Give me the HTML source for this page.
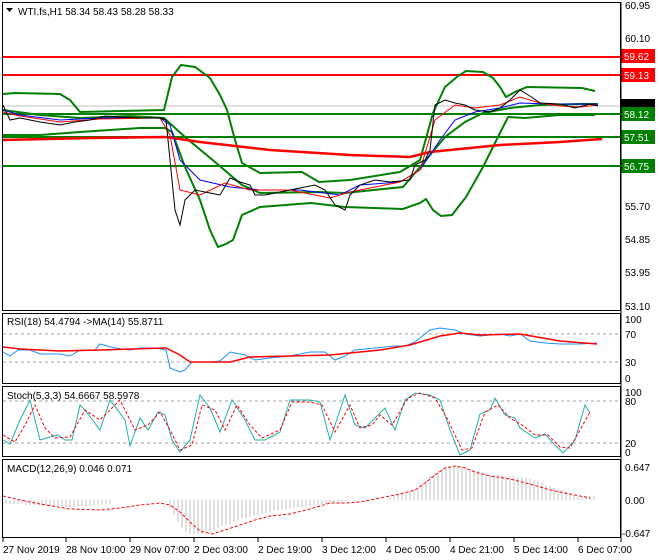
<!DOCTYPE html><html><head><style>
body{margin:0;background:#fff;width:660px;height:560px;overflow:hidden}
svg{display:block;font-family:"Liberation Sans",sans-serif;font-size:10px}
</style></head><body>
<svg width="660" height="560" viewBox="0 0 660 560">
<rect width="660" height="560" fill="#fff"/>
<g fill="none" stroke="#000" stroke-width="1">
<rect x="2.5" y="2.5" width="618" height="308"/>
<rect x="2.5" y="313.5" width="618" height="70"/>
<rect x="2.5" y="386.5" width="618" height="70"/>
<rect x="2.5" y="459.5" width="618" height="78"/>
</g>
<!-- main -->
<line x1="3" y1="106" x2="620" y2="106" stroke="#c0c0c0"/>
<g stroke="#ff0000" stroke-width="2"><line x1="3" y1="57" x2="620" y2="57"/><line x1="3" y1="75" x2="620" y2="75"/></g>
<g stroke="#008000" stroke-width="2"><line x1="3" y1="114" x2="620" y2="114"/><line x1="3" y1="137" x2="620" y2="137"/><line x1="3" y1="166" x2="620" y2="166"/></g>
<g fill="none" stroke="#008000" stroke-width="2">
<polyline points="3,94 15,93 60,94 70,100 80,112 120,111 164,110 172,77 181,65 195,67 210,78 220,95 227,110 235,140 242,163 260,173 302,172 319,182 350,180 400,172 420,160 433,113 445,87 458,76 466,71 483,72 493,78 500,87 506,97 515,92 527,87 582,88 595,91"/>
<polyline points="3,135 40,135 80,132 140,128 165,128 172,132 185,167 200,200 210,230 218,247 226,244 233,240 242,215 260,207 311,203 345,207 403,209 420,203 426,199 433,210 441,216 452,215 466,197 483,167 500,133 508,117 525,118 559,115 595,115"/>
<polyline points="3,110 40,115 80,118 130,116 164,118 185,137 215,162 242,185 260,193 319,192 345,193 403,187 420,167 445,137 465,122 483,113 510,108 540,105 580,104 598,104"/>
</g>
<polyline fill="none" stroke="#ff0000" stroke-width="2.5" points="3,140 90,138 166,137 200,142 270,150 350,155 410,157 430,152 500,145 560,142 602,139"/>
<polyline fill="none" stroke="#0000ff" stroke-width="1" points="3,110 20,115 60,120 100,118 160,118 170,125 180,160 200,180 230,187 260,190 300,190 340,195 360,185 400,182 420,170 440,140 455,120 475,112 500,108 520,103 550,104 580,104 598,104"/>
<polyline fill="none" stroke="#ff0000" stroke-width="1" points="3,112 20,116 60,122 100,119 160,118 170,135 180,190 200,195 225,183 250,190 290,190 330,198 350,192 400,182 420,170 435,120 455,105 475,108 500,105 520,97 540,103 560,106 580,107 598,105"/>
<polyline fill="none" stroke="#000" stroke-width="1" points="3,105 10,120 20,118 40,122 60,125 75,122 90,120 105,116 120,117 140,118 160,118 166,120 170,160 175,210 180,225 185,200 195,190 210,193 220,195 230,178 240,182 250,185 255,195 265,195 280,192 300,188 315,185 325,190 335,205 345,210 350,195 360,185 375,180 390,182 410,180 415,165 425,160 430,150 435,105 445,100 455,103 465,105 475,110 490,112 500,108 510,100 520,90 530,96 540,103 560,104 575,108 590,104 598,106"/>
<g fill="#000">
<text x="18" y="15">WTI.fs,H1  58.34 58.43 58.28 58.33</text>
<path d="M6 8h7l-3.5 4z"/>
<text x="625" y="9">60.95</text><text x="625" y="42">60.10</text><text x="625" y="210">55.70</text><text x="625" y="243">54.85</text><text x="625" y="276">53.95</text><text x="625" y="310">53.10</text>
</g>
<rect x="621" y="49" width="34" height="14" fill="#ff0000"/><text x="624" y="60" fill="#fff">59.62</text>
<rect x="621" y="68" width="34" height="14" fill="#ff0000"/><text x="624" y="79" fill="#fff">59.13</text>
<rect x="621" y="99" width="34" height="8" fill="#000"/>
<rect x="621" y="107" width="34" height="14" fill="#008000"/><text x="624" y="118" fill="#fff">58.12</text>
<rect x="621" y="130" width="34" height="14" fill="#008000"/><text x="624" y="141" fill="#fff">57.51</text>
<rect x="621" y="159" width="34" height="14" fill="#008000"/><text x="624" y="170" fill="#fff">56.75</text>
<!-- RSI -->
<g stroke="#a0a0a0" stroke-dasharray="3,3"><line x1="3" y1="334" x2="620" y2="334"/><line x1="3" y1="362" x2="620" y2="362"/></g>
<polyline fill="none" stroke="#1e90ff" points="3,352 10,356 18,350 30,350 40,354 60,354 70,356 80,350 95,350 100,344 115,348 130,350 140,348 155,348 166,350 170,368 180,372 185,370 192,362 210,362 220,361 230,352 245,355 255,360 270,358 290,356 310,352 325,352 335,360 345,356 355,350 375,348 395,346 405,346 415,342 420,338 430,330 440,328 455,330 465,334 480,336 500,334 510,336 520,334 530,341 545,343 560,344 580,344 597,343"/>
<polyline fill="none" stroke="#ff0000" stroke-width="1.5" points="3,347 20,349 60,351 100,350 166,348 180,355 190,362 230,362 250,357 290,356 330,355 380,350 410,345 440,336 460,333 480,335 520,334 560,341 597,344"/>
<g fill="#000"><text x="7" y="325">RSI(18) 54.4794  -&gt;MA(14) 55.8711</text><text x="625" y="323">100</text><text x="625" y="338">70</text><text x="625" y="366">30</text><text x="625" y="382">0</text></g>
<!-- Stoch -->
<g stroke="#a0a0a0" stroke-dasharray="3,3"><line x1="3" y1="401" x2="620" y2="401"/><line x1="3" y1="443" x2="620" y2="443"/></g>
<polyline fill="none" stroke="#20b2aa" points="3,440 10,444 20,420 30,400 40,440 50,437 58,435 65,440 72,440 80,405 85,410 100,430 110,400 125,420 130,446 140,418 148,430 158,412 165,415 172,440 180,452 190,440 200,395 210,408 220,432 232,400 245,420 255,440 265,440 280,432 290,400 310,400 320,402 330,440 345,395 355,425 365,428 375,418 385,408 395,430 405,400 415,393 430,395 440,400 450,430 460,455 470,450 480,414 490,410 495,398 505,415 515,418 520,428 535,438 545,434 555,445 563,453 575,440 585,405 590,413"/>
<polyline fill="none" stroke="#ff0000" stroke-dasharray="3,2" points="3,435 15,442 25,425 35,405 45,428 55,438 70,437 85,410 100,420 110,410 120,400 135,430 148,425 160,412 170,430 180,450 192,445 202,405 215,410 225,430 237,405 250,425 262,438 280,430 292,402 310,402 322,405 335,432 350,405 360,428 372,425 380,415 392,425 408,398 420,393 435,398 448,420 462,450 472,448 485,412 498,405 510,418 522,425 535,435 548,435 560,447 570,448 580,430 590,412"/>
<g fill="#000"><text x="7" y="399">Stoch(5,3,3) 54.6667 58.5978</text><text x="625" y="396">100</text><text x="625" y="405">80</text><text x="625" y="447">20</text><text x="625" y="456">0</text></g>
<!-- MACD -->
<g stroke="#c0c0c0" stroke-width="1">
<path d="M6 500v3M10 500v4M14 500v4M18 500v4M22 500v4M26 500v5M30 500v5M34 500v5M38 500v5M42 500v6M46 500v6M50 500v6M54 500v6M58 500v6M62 500v7M66 500v7M70 500v7M74 500v7M78 500v6M82 500v6M86 500v6M90 500v5M94 500v5M98 500v5M102 500v4M106 500v4M110 500v4M170 500v8M174 500v15M178 500v22M182 500v28M186 500v32M190 500v34M194 500v34M198 500v34M202 500v34M206 500v33M210 500v32M214 500v30M218 500v28M222 500v26M226 500v25M230 500v24M234 500v22M238 500v20M242 500v19M246 500v18M250 500v17M254 500v16M258 500v15M262 500v14M266 500v13M270 500v12M274 500v11M278 500v10M282 500v10M286 500v9M290 500v8M294 500v8M298 500v7M302 500v7M306 500v6M310 500v6M314 500v5M318 500v5M322 500v4M326 500v4M330 500v3M334 500v3M338 500v2M342 500v2M346 500v1M390 500v-3M394 500v-4M398 500v-5M402 500v-6M406 500v-7M410 500v-8M414 500v-10M418 500v-12M422 500v-16M426 500v-20M430 500v-24M434 500v-27M438 500v-29M442 500v-31M446 500v-33M450 500v-34M454 500v-34M458 500v-34M462 500v-33M466 500v-32M470 500v-31M474 500v-30M478 500v-29M482 500v-28M486 500v-27M490 500v-26M494 500v-25M498 500v-25M502 500v-25M506 500v-24M510 500v-24M514 500v-24M518 500v-23M522 500v-23M526 500v-22M530 500v-21M534 500v-20M538 500v-19M542 500v-17M546 500v-15M550 500v-14M554 500v-12M558 500v-11M562 500v-10M566 500v-8M570 500v-7M574 500v-5M578 500v-4M582 500v-4M586 500v-4M590 500v-4M594 500v-4"/>
</g>
<polyline fill="none" stroke="#ff0000" stroke-dasharray="3,2" points="3,496 20,500 40,504 70,509 100,510 120,508 140,505 160,503 170,505 180,512 190,522 200,531 212,534 225,530 240,525 255,520 270,516 290,514 310,509 330,503 345,503 360,502 380,498 400,494 415,490 425,483 435,475 445,468 455,466 465,468 475,472 490,476 510,479 530,484 550,490 570,494 590,498"/>
<g fill="#000"><text x="7" y="472">MACD(12,26,9) 0.046 0.071</text><text x="625" y="471">0.647</text><text x="625" y="504">0.00</text><text x="622" y="537">-0.647</text></g>
<!-- time axis -->
<g stroke="#000"><path d="M3 538v4M66 538v4M130 538v4M194 538v4M258 538v4M322 538v4M386 538v4M450 538v4M514 538v4M578 538v4M621 2v540"/></g>
<g fill="#000"><text x="3" y="553">27 Nov 2019</text><text x="66" y="553">28 Nov 10:00</text><text x="130" y="553">29 Nov 07:00</text><text x="194" y="553">2 Dec 03:00</text><text x="258" y="553">2 Dec 19:00</text><text x="322" y="553">3 Dec 12:00</text><text x="386" y="553">4 Dec 05:00</text><text x="450" y="553">4 Dec 21:00</text><text x="514" y="553">5 Dec 14:00</text><text x="578" y="553">6 Dec 07:00</text></g>
</svg>
</body></html>
